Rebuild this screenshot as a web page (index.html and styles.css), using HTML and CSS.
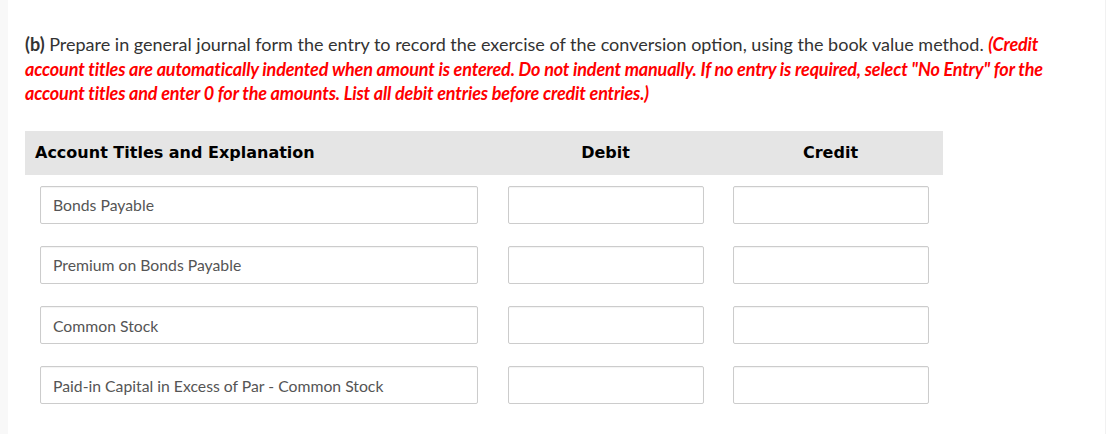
FILE: index.html
```html
<!DOCTYPE html>
<html>
<head>
<meta charset="utf-8">
<link rel="stylesheet" href="styles.css">
</head>
<body>
<div class="page">
  <div class="strip"></div>
  <div class="main">
    <p class="question"><b>(b)</b> Prepare in general journal form the entry to record the exercise of the conversion option, using the book value method. <em class="note">(Credit account titles are automatically indented when amount is entered. Do not indent manually. If no entry is required, select "No Entry" for the account titles and enter 0 for the amounts. List all debit entries before credit entries.)</em></p>
    <div class="journal">
      <div class="head">
        <div class="h-title">Account Titles and Explanation</div>
        <div class="h-num">Debit</div>
        <div class="h-num">Credit</div>
      </div>
      <div class="rows">
        <div class="row">
          <div class="cell-title"><div class="box title">Bonds Payable</div></div>
          <div class="cell-num"><div class="box num"></div></div>
          <div class="cell-num"><div class="box num"></div></div>
        </div>
        <div class="row">
          <div class="cell-title"><div class="box title">Premium on Bonds Payable</div></div>
          <div class="cell-num"><div class="box num"></div></div>
          <div class="cell-num"><div class="box num"></div></div>
        </div>
        <div class="row">
          <div class="cell-title"><div class="box title">Common Stock</div></div>
          <div class="cell-num"><div class="box num"></div></div>
          <div class="cell-num"><div class="box num"></div></div>
        </div>
        <div class="row">
          <div class="cell-title"><div class="box title">Paid-in Capital in Excess of Par - Common Stock</div></div>
          <div class="cell-num"><div class="box num"></div></div>
          <div class="cell-num"><div class="box num"></div></div>
        </div>
      </div>
    </div>
  </div>
  <div class="edge"></div>
</div>
</body>
</html>
```

FILE: styles.css
```css
html, body {
  margin: 0;
  padding: 0;
  background: #fff;
}
.page {
  display: flex;
  width: 1106px;
  height: 434px;
  overflow: hidden;
}
.strip {
  width: 8px;
  flex: none;
  background: #f8f8f8;
}
.edge {
  width: 1px;
  flex: none;
  background: #f1f1f1;
}
.main {
  flex: 1;
  padding: 0 0 0 17px;
}
.question {
  margin: 32px 0 0 0;
  width: 1046px;
  font-family: Lato, "Open Sans", sans-serif;
  font-size: 18px;
  line-height: 24.5px;
  color: #333;
}
.question b {
  font-weight: bold;
  color: #333;
}
.note {
  font-weight: bold;
  font-style: italic;
  color: #f00;
  letter-spacing: -0.16px;
}
.journal {
  margin-top: 25px;
  width: 918px;
}
.head {
  display: grid;
  grid-template-columns: 468px 225px 225px;
  height: 44px;
  align-items: center;
  background: #e5e5e5;
  font-family: "DejaVu Sans", Verdana, sans-serif;
  font-weight: bold;
  font-size: 16px;
  color: #000;
}
.h-title {
  padding-left: 10px;
}
.h-num {
  text-align: center;
}
.rows {
  display: flex;
  flex-direction: column;
  gap: 22.3px;
  margin-top: 11px;
}
.row {
  display: grid;
  grid-template-columns: 468px 225px 225px;
}
.cell-title, .cell-num {
  padding-left: 15px;
}
.box {
  box-sizing: border-box;
  height: 38px;
  border: 1px solid #ccc;
  border-radius: 2px;
  background: #fff;
  box-shadow: inset 0 1px 1px rgba(0,0,0,0.05);
}
.title {
  width: 438px;
  padding: 0 0 0 12px;
  display: flex;
  align-items: center;
  font-family: Lato, "Open Sans", sans-serif;
  font-size: 15.75px;
  color: #555;
}
.num {
  width: 196px;
}
```
